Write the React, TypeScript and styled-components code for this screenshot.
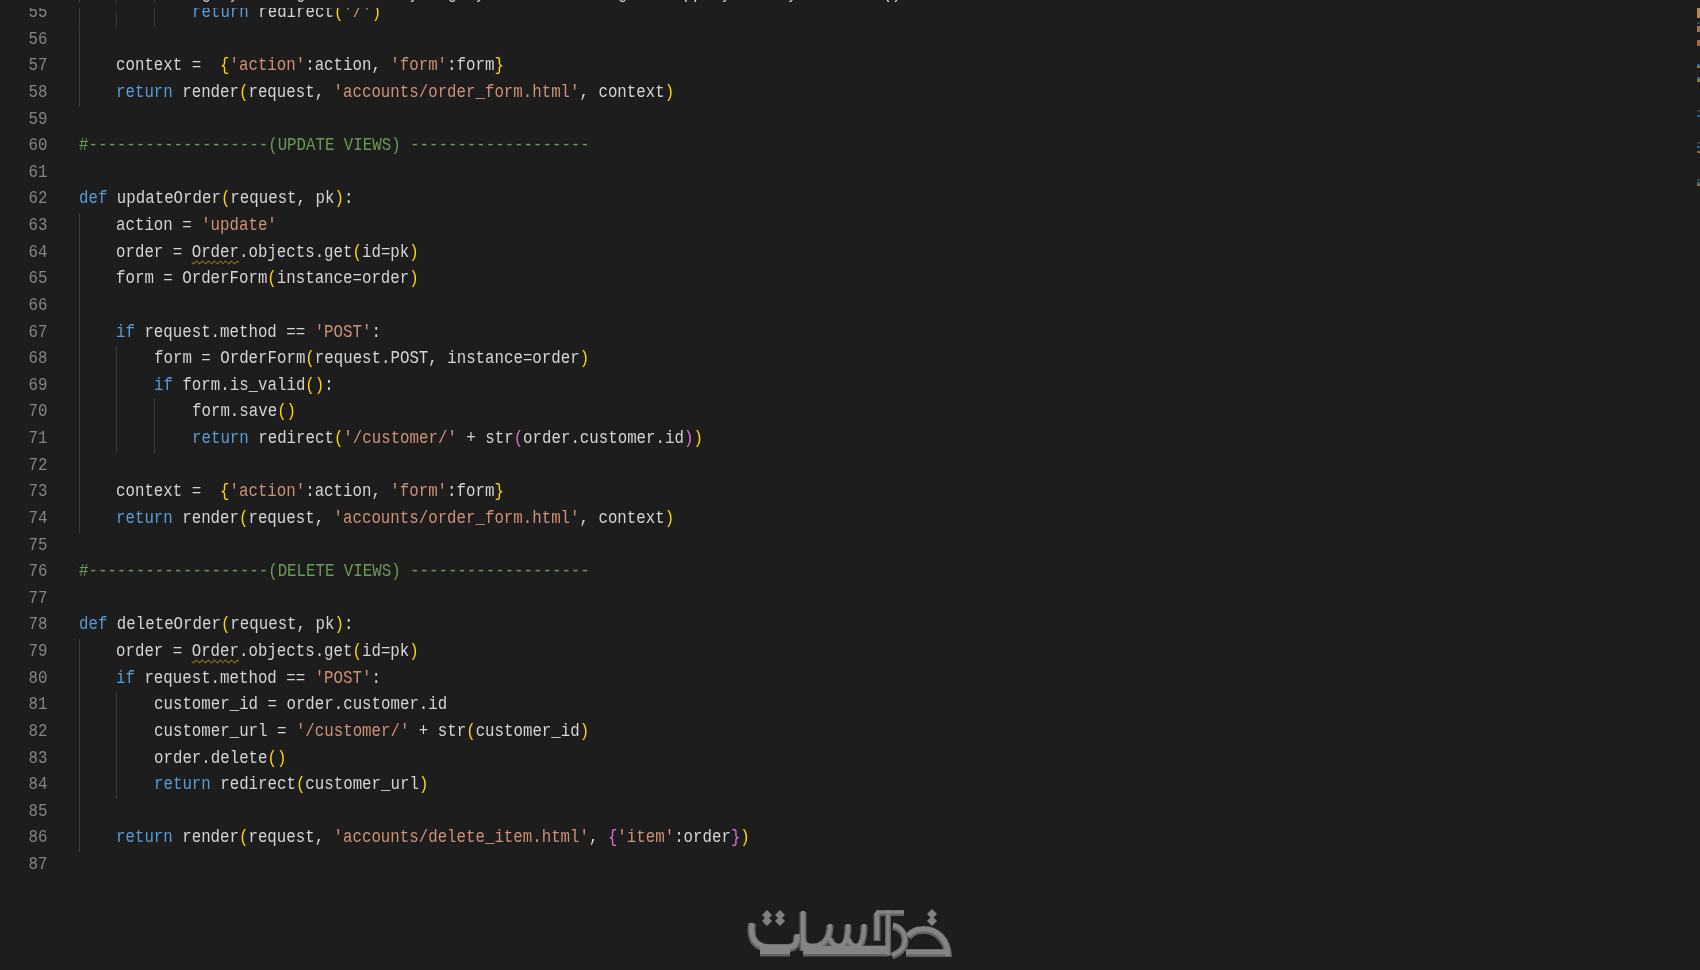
import React from "react";
import styled, { createGlobalStyle } from "styled-components";

const Global = createGlobalStyle`
  html, body { margin: 0; height: 100%; background: #1d1d1d; overflow: hidden; }
  #root { height: 100%; }
`;

const Page = styled.main`
  position: relative;
  display: flex;
  flex-direction: column;
  height: 970px;
  overflow: hidden;
  background: #1d1d1d;
`;

const Editor = styled.section`
  display: flex;
  flex-direction: column;
  font-family: "Liberation Mono", "DejaVu Sans Mono", monospace;
  font-size: 18.5px;
  filter: blur(0.35px);
`;

const Row = styled.div`
  display: flex;
  height: 26.63px;
  line-height: 26.63px;
  white-space: pre;
`;

/* The line above the first full one: only its descenders show at the window edge. */
const CutRow = styled(Row)`
  height: 3px;
  margin-bottom: -3px;
  overflow: hidden;
`;

const CutText = styled.div`
  margin-top: -19px;
`;

const TopRow = styled(Row)`
  clip-path: inset(8px 0 0 0);
`;

const LineNo = styled.span`
  flex: none;
  width: 47.5px;
  margin-right: 31.2px;
  text-align: right;
  color: #858585;
  transform: scaleX(0.851);
  transform-origin: right center;
`;

const Guide = styled.span<{ $start?: number }>`
  flex: none;
  box-sizing: border-box;
  width: 37.78px;
  margin-top: ${(p) => p.$start ?? 0}px;
  border-left: 1px solid #3c3c3c;
`;

const Code = styled.code`
  display: block;
  font: inherit;
  transform: scaleX(0.852);
  transform-origin: left center;
`;

const palette = {
  t: "#d4d4d4",
  k: "#569cd6",
  s: "#ce9178",
  c: "#6a9955",
  g: "#ffd700",
  p: "#da70d6",
};

type Kind = keyof typeof palette | "w";

const Tok = styled.span<{ $k: Exclude<Kind, "w"> }>`
  color: ${(p) => palette[p.$k]};
`;

const Warn = styled.span`
  color: #d4d4d4;
  text-decoration: underline wavy #cca700 1px;
  text-underline-offset: 3px;
`;

type Part = [Kind, string];
type Line = { n: number; guides: number; parts?: Part[]; starts?: number[] };

const t = (v: string): Part => ["t", v];
const k = (v: string): Part => ["k", v];
const s = (v: string): Part => ["s", v];
const c = (v: string): Part => ["c", v];
const g = (v: string): Part => ["g", v];
const p = (v: string): Part => ["p", v];
const w = (v: string): Part => ["w", v];

const cut: Part[] = [t("age yes an go is not any big ky form is validg itemspps y ordery customer()")];

const lines: Line[] = [
  { n: 55, guides: 3, starts: [0, 13, 0], parts: [k("return "), t("redirect"), g("("), s("'/'"), g(")")] },
  { n: 56, guides: 1 },
  { n: 57, guides: 1, parts: [t("context =  "), g("{"), s("'action'"), t(":action, "), s("'form'"), t(":form"), g("}")] },
  { n: 58, guides: 1, parts: [k("return "), t("render"), g("("), t("request, "), s("'accounts/order_form.html'"), t(", context"), g(")")] },
  { n: 59, guides: 0 },
  { n: 60, guides: 0, parts: [c("#-------------------(UPDATE VIEWS) -------------------")] },
  { n: 61, guides: 0 },
  { n: 62, guides: 0, parts: [k("def "), t("updateOrder"), g("("), t("request, pk"), g(")"), t(":")] },
  { n: 63, guides: 1, parts: [t("action = "), s("'update'")] },
  { n: 64, guides: 1, parts: [t("order = "), w("Order"), t(".objects.get"), g("("), t("id=pk"), g(")")] },
  { n: 65, guides: 1, parts: [t("form = OrderForm"), g("("), t("instance=order"), g(")")] },
  { n: 66, guides: 1 },
  { n: 67, guides: 1, parts: [k("if "), t("request.method == "), s("'POST'"), t(":")] },
  { n: 68, guides: 2, parts: [t("form = OrderForm"), g("("), t("request.POST, instance=order"), g(")")] },
  { n: 69, guides: 2, parts: [k("if "), t("form.is_valid"), g("()"), t(":")] },
  { n: 70, guides: 3, parts: [t("form.save"), g("()")] },
  { n: 71, guides: 3, parts: [k("return "), t("redirect"), g("("), s("'/customer/'"), t(" + str"), p("("), t("order.customer.id"), p(")"), g(")")] },
  { n: 72, guides: 1 },
  { n: 73, guides: 1, parts: [t("context =  "), g("{"), s("'action'"), t(":action, "), s("'form'"), t(":form"), g("}")] },
  { n: 74, guides: 1, parts: [k("return "), t("render"), g("("), t("request, "), s("'accounts/order_form.html'"), t(", context"), g(")")] },
  { n: 75, guides: 0 },
  { n: 76, guides: 0, parts: [c("#-------------------(DELETE VIEWS) -------------------")] },
  { n: 77, guides: 0 },
  { n: 78, guides: 0, parts: [k("def "), t("deleteOrder"), g("("), t("request, pk"), g(")"), t(":")] },
  { n: 79, guides: 1, parts: [t("order = "), w("Order"), t(".objects.get"), g("("), t("id=pk"), g(")")] },
  { n: 80, guides: 1, parts: [k("if "), t("request.method == "), s("'POST'"), t(":")] },
  { n: 81, guides: 2, parts: [t("customer_id = order.customer.id")] },
  { n: 82, guides: 2, parts: [t("customer_url = "), s("'/customer/'"), t(" + str"), g("("), t("customer_id"), g(")")] },
  { n: 83, guides: 2, parts: [t("order.delete"), g("()")] },
  { n: 84, guides: 2, parts: [k("return "), t("redirect"), g("("), t("customer_url"), g(")")] },
  { n: 85, guides: 1 },
  { n: 86, guides: 1, parts: [k("return "), t("render"), g("("), t("request, "), s("'accounts/delete_item.html'"), t(", "), p("{"), s("'item'"), t(":order"), p("}"), g(")")] },
  { n: 87, guides: 0 },
];

const Tokens = ({ parts }: { parts: Part[] }) => (
  <Code>
    {parts.map(([kind, text], i) =>
      kind === "w" ? <Warn key={i}>{text}</Warn> : <Tok key={i} $k={kind}>{text}</Tok>
    )}
  </Code>
);

const Footer = styled.footer`
  display: flex;
  justify-content: center;
  margin-top: 22.6px;
`;

const LogoSvg = styled.svg`
  display: block;
  width: 220px;
  height: 60px;
  filter: blur(0.5px);
`;

const strokes: [string, number][] = [
  ["M12 23 C10 38 15 47 30 47 H48 C55 47 58 43 57 34", 8],
  ["M20 51 H50", 9],
  ["M63 11 V50", 7],
  ["M63 38 Q63 46 72 46 Q90 46 90 24", 7],
  ["M90 38 Q92 46 99 46 Q108 46 108 24", 7],
  ["M108 38 Q110 46 116 46 Q124 46 124 24", 7],
  ["M63 50 H148", 11],
  ["M148 10 V55", 6],
  ["M136 12 H164", 6],
  ["M137 12 V40", 7],
  ["M153 25 C161 27 165 33 165 40 C165 48 160 52 152 55", 7],
  ["M166 52 H208", 8],
  ["M208 56 C208 40 197 28 182 29 C177 29 172 31 168 36", 8],
];

const diamonds: [number, number][] = [
  [27, 14],
  [27, 20],
  [40, 14],
  [40, 20],
  [192, 13],
  [192, 20],
];

const Logo = () => (
  <LogoSvg viewBox="0 0 220 60" aria-hidden="true">
    <g fill="none">
      {strokes.map(([d, sw]) => (
        <path key={d} d={d} stroke="#626262" strokeWidth={sw} />
      ))}
      {strokes.map(([d, sw]) => (
        <path key={`${d}h`} d={d} stroke="#848484" strokeWidth={sw - 3} transform="translate(0 -1)" />
      ))}
    </g>
    {diamonds.map(([x, y]) => (
      <path key={`${x}-${y}`} d={`M${x} ${y - 5} l5 5 l-5 5 l-5 -5 z`} fill="#808080" />
    ))}
  </LogoSvg>
);

const Ruler = styled.aside`
  position: absolute;
  top: 0;
  right: 0;
  width: 3px;
  display: flex;
  flex-direction: column;
`;

const Tick = styled.i<{ $top: number; $h: number; $c: string }>`
  display: block;
  height: ${(p) => p.$h}px;
  margin-top: ${(p) => p.$top}px;
  background: ${(p) => p.$c};
`;

const ticks: [number, number, string][] = [
  [8, 10, "#b08a4c"],
  [4, 2, "#3e4a3c"],
  [2, 6, "#96764a"],
  [8, 6, "#a06c3c"],
  [18, 2, "#2f5f86"],
  [0, 2, "#8a7a4a"],
  [9, 2, "#2f5f86"],
  [0, 3, "#8a7a4a"],
  [28, 2, "#3a3a3a"],
  [3, 2, "#2f5f86"],
  [25, 2, "#3a3a3a"],
  [2, 2, "#2f5f86"],
  [3, 2, "#8a6a42"],
  [26, 2, "#3a4a3a"],
  [1, 2, "#2f5f86"],
  [0, 2, "#8a6a42"],
];

export default function App() {
  return (
    <Page>
      <Global />
      <Editor>
        <CutRow>
          <LineNo />
          <Guide />
          <Guide />
          <Guide />
          <CutText>
            <Tokens parts={cut} />
          </CutText>
        </CutRow>
        {lines.map((l) => {
          const RowKind = l.n === 55 ? TopRow : Row;
          return (
            <RowKind key={l.n}>
              <LineNo>{l.n}</LineNo>
              {Array.from({ length: l.guides }, (_, i) => (
                <Guide key={i} $start={l.starts?.[i]} />
              ))}
              {l.parts && <Tokens parts={l.parts} />}
            </RowKind>
          );
        })}
      </Editor>
      <Footer>
        <Logo />
      </Footer>
      <Ruler>
        {ticks.map(([top, h, col], i) => (
          <Tick key={i} $top={top} $h={h} $c={col} />
        ))}
      </Ruler>
    </Page>
  );
}
